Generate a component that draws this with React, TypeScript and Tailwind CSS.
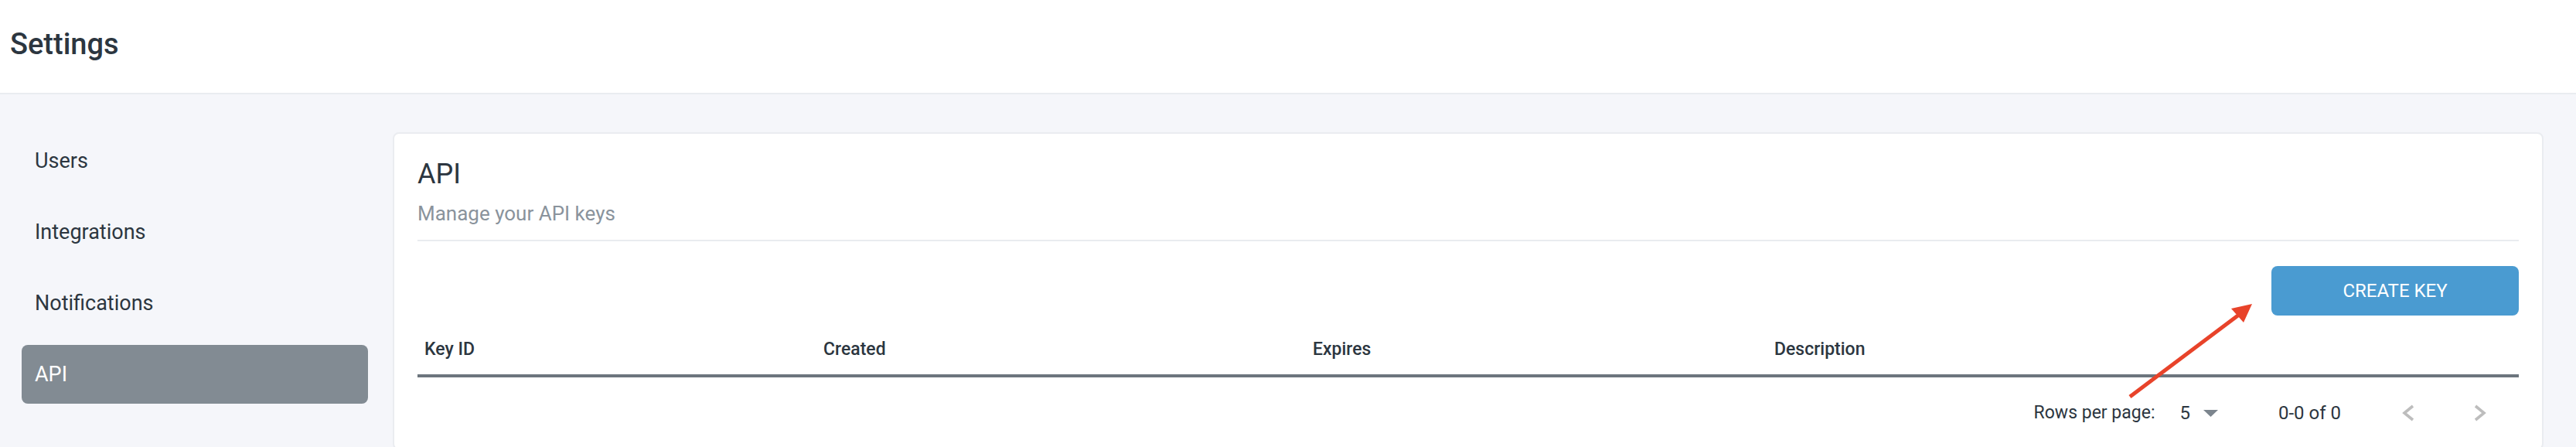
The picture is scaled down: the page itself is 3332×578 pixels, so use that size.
import React from "react";

const font = { fontFamily: "Roboto, 'Liberation Sans', Arial, sans-serif" };

function ChevronLeft() {
  return (
    <svg width="18" height="22" viewBox="0 0 18 22" fill="none">
      <polyline points="15,2 4,11 15,20" stroke="#bdbdbd" strokeWidth="3.6" strokeLinecap="butt" strokeLinejoin="miter" />
    </svg>
  );
}

function ChevronRight() {
  return (
    <svg width="18" height="22" viewBox="0 0 18 22" fill="none">
      <polyline points="3,2 14,11 3,20" stroke="#bdbdbd" strokeWidth="3.6" strokeLinecap="butt" strokeLinejoin="miter" />
    </svg>
  );
}

export default function App() {
  const items = ["Users", "Integrations", "Notifications", "API"];
  return (
    <div className="relative min-h-[578px] w-full bg-[#f5f6fa] text-[#2c3640]" style={font}>
      <header className="flex h-[122px] items-center border-b-2 border-[#e9ecf0] bg-white pb-[7px] pl-[13px]">
        <h1 className="text-[38px] font-medium leading-[44px] text-[#2c3640]">Settings</h1>
      </header>

      <div className="flex pr-[42px] pt-[48px]">
        <nav className="ml-[28px] flex w-[448px] shrink-0 flex-col gap-[16px]">
          {items.map((it) => (
            <div
              key={it}
              className={
                it === "API"
                  ? "flex h-[76px] items-center rounded-[8px] bg-[#828b93] pl-[17px] text-[27px] text-white"
                  : "flex h-[76px] items-center rounded-[8px] pl-[17px] text-[27px] text-[#2c3640]"
              }
            >
              {it}
            </div>
          ))}
        </nav>

        <section className="ml-[32px] mt-px flex-1 rounded-[8px] border-2 border-[#eaecf0] bg-white px-[30px] pt-[30px]">
          <h2 className="text-[36px] leading-[44px] text-[#2c3640]">API</h2>
          <p className="mt-[13px] text-[26px] leading-[32px] text-[#8a939c]">Manage your API keys</p>
          <div className="mt-[18px] h-[2px] bg-[#e9ecef]" />

          <div className="mt-[32px] flex justify-end">
            <button className="flex h-[64px] w-[320px] items-center justify-center rounded-[8px] bg-[#4a9bd1] text-[24px] text-white">
              CREATE KEY
            </button>
          </div>

          <div className="mt-[16px] grid h-[64px] grid-cols-[516px_633px_597px_1fr] items-center border-b-4 border-[#6c757d] pb-[4px] text-[23px] font-medium text-[#2c3640]">
            <div className="px-[9px]">Key ID</div>
            <div className="px-[9px]">Created</div>
            <div className="px-[9px]">Expires</div>
            <div className="px-[9px]">Description</div>
          </div>

          <div className="flex h-[92px] items-center justify-end pr-[26px] text-[#2c3640]">
            <span className="text-[23px]">Rows per page:</span>
            <span className="ml-[32px] text-[24px]">5</span>
            <svg className="ml-[17px]" width="19" height="9" viewBox="0 0 19 9">
              <polygon points="0,0 19,0 9.5,9" fill="#7c858e" />
            </svg>
            <span className="ml-[78px] text-[24px]">0-0 of 0</span>
            <div className="ml-[63px] flex h-[48px] w-[48px] items-center justify-center">
              <ChevronLeft />
            </div>
            <div className="ml-[45px] flex h-[48px] w-[48px] items-center justify-center">
              <ChevronRight />
            </div>
          </div>
        </section>
      </div>

      <svg className="pointer-events-none absolute left-[2740px] top-[380px]" width="200" height="150" viewBox="0 0 200 150">
        <line x1="15" y1="133" x2="156" y2="27" stroke="#e8432a" strokeWidth="5" />
        <polygon points="173,13 146,19 162,37" fill="#e8432a" />
      </svg>
    </div>
  );
}
